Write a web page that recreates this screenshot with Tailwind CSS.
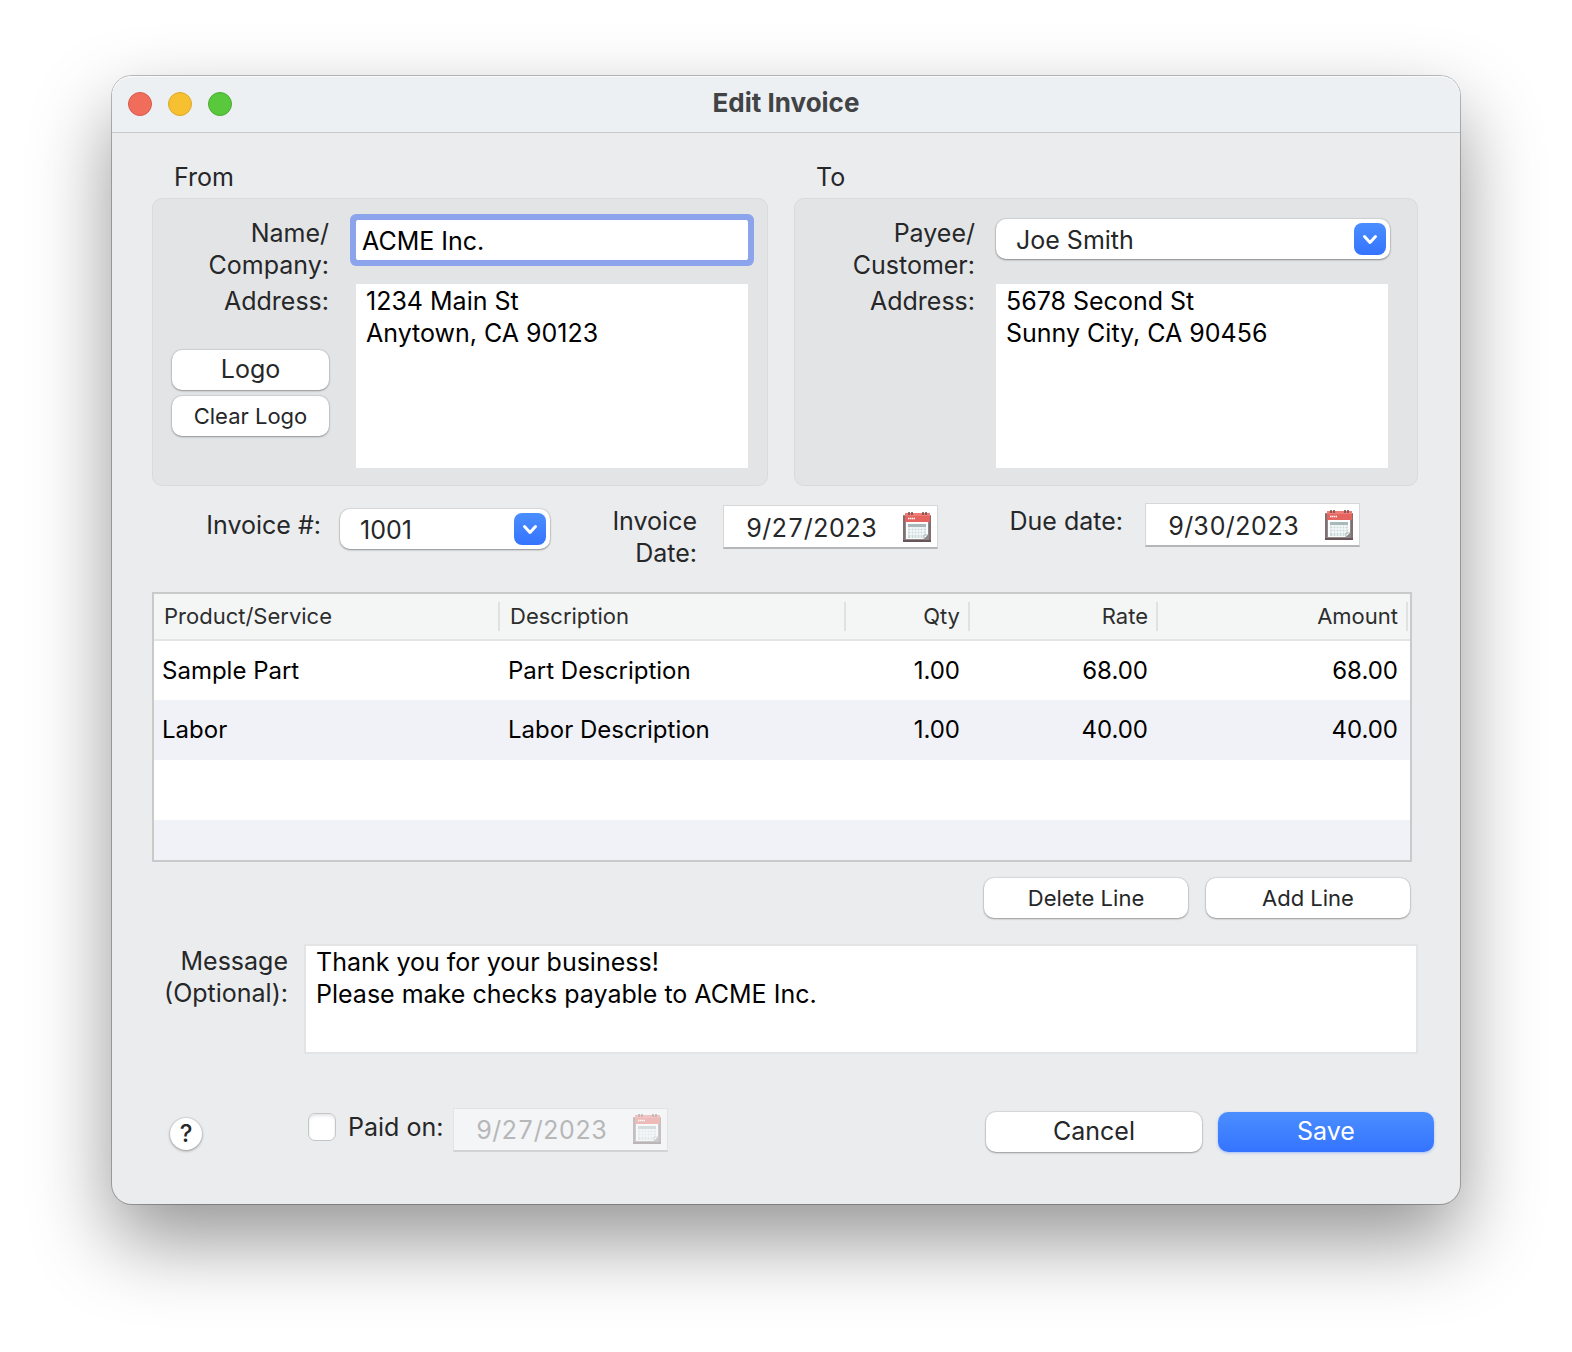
<!DOCTYPE html>
<html lang="en">
  <head>
    <meta charset="UTF-8" />
    <meta name="viewport" content="width=device-width, initial-scale=1.0" />
    <script src="https://cdn.jsdelivr.net/npm/@tailwindcss/browser@4"></script>
    <title>Edit Invoice</title>
  </head>
  <body class="bg-white px-28 pt-19 pb-37 font-[Inter,sans-serif] text-[25px] leading-8 text-[#262728]">
    <!-- Shared icons -->
    <svg class="hidden">
      <symbol id="calendar" viewBox="0 0 30 32">
        <path d="M1 4h28v27H1z" fill="#94878a" />
        <path d="M1 5h2v26H1zM27 5h2v26h-2z" fill="#7d6f72" />
        <path d="M1 29h28v2H1z" fill="#665659" />
        <path d="M3 2h25v9H3z" fill="#e5645f" />
        <path d="M3 2h25v3H3z" fill="#ee7c75" />
        <path d="M4 11h22v13l-4 4H4z" fill="#fbfdfd" />
        <path d="M6 13h18v11l-3 3H6z" fill="#cbd9da" />
        <path d="M6 13h18v3H6z" fill="#a9b8bb" />
        <path d="M6 17h18M6 20h18M6 23h18M9 16v11M12 16v11M15 16v11M18 16v11M21 16v11" stroke="#fff" fill="none" />
        <path d="M22 28v-4h4z" fill="#fff" stroke="#7f9796" stroke-width=".7" />
        <path d="M6 7.500h7" stroke="#fff" stroke-width="1.500" stroke-dasharray="1.500 .5" />
        <path d="M7 1v3M10 1v3M21 1v3M24 1v3" stroke="#6d4a4a" stroke-width="1.500" />
      </symbol>
      <symbol id="chevron" viewBox="0 0 32 32">
        <path d="M10.500 13.500l5.500 6 5.500-6" fill="none" stroke="#fff" stroke-width="3" stroke-linecap="round" stroke-linejoin="round" />
      </symbol>
    </svg>

    <main class="rounded-[20px] bg-[#ebecee] shadow-[0_0_0_1px_rgba(0,0,0,0.25),0_36px_80px_rgba(0,0,0,0.42)]">
      <!-- Title bar -->
      <header class="grid h-[57px] grid-cols-[1fr_auto_1fr] items-center rounded-t-[20px] border-b border-[#c6c8ca] bg-[#ecf0f3] px-4 inset-shadow-[0_1px_0_#fafbfb]">
        <div class="flex gap-4">
          <button aria-label="Close" class="size-6 rounded-full border border-[#d9584b] bg-[#f06d5c]"></button>
          <button aria-label="Minimize" class="size-6 rounded-full border border-[#dfa72a] bg-[#f6c030]"></button>
          <button aria-label="Zoom" class="size-6 rounded-full border border-[#48ad2d] bg-[#5ac83d]"></button>
        </div>
        <h1 class="pb-0.5 text-[26px] font-bold text-[#414345]">Edit Invoice</h1>
      </header>

      <form class="pt-7 pb-13">
        <!-- From / To -->
        <div class="mr-[42px] ml-10 grid grid-cols-[616fr_624fr] gap-[26px]">
          <section>
            <h2 class="mb-[5px] pl-[22px]">From</h2>
            <div class="grid grid-cols-[157px_1fr] gap-x-[27px] gap-y-[3px] rounded-[10px] border border-[#d8dadb] bg-[#e3e4e6] pt-[18px] pr-[19px] pb-[17px] pl-[19px]">
              <label for="company" class="text-right">Name/<br />Company:</label>
              <div class="pt-[3px]">
                <div class="rounded-xs bg-white ring-6 ring-[#8ba4eb]">
                  <input id="company" type="text" value="ACME Inc." class="h-10 w-full px-1.5 pt-0.5 text-black outline-none" />
                </div>
              </div>
              <div class="flex flex-col pt-px">
                <label for="from-address" class="text-right">Address:</label>
                <button type="button" class="mt-[33px] h-10 rounded-[10px] bg-white pb-0.5 shadow-[0_0_1px_1px_rgba(0,0,0,0.08),0_1px_2px_rgba(0,0,0,0.3)]">Logo</button>
                <button type="button" class="mt-1.5 h-10 rounded-[10px] bg-white text-[22px] shadow-[0_0_1px_1px_rgba(0,0,0,0.08),0_1px_2px_rgba(0,0,0,0.3)]">Clear Logo</button>
              </div>
              <textarea id="from-address" class="h-46 w-full resize-none bg-white px-2.5 py-px text-black outline-none">
1234 Main St
Anytown, CA 90123</textarea>
            </div>
          </section>

          <section>
            <h2 class="mb-[5px] pl-[22px]">To</h2>
            <div class="grid grid-cols-[161px_1fr] gap-x-[21px] gap-y-[3px] rounded-[10px] border border-[#d8dadb] bg-[#e3e4e6] pt-[18px] pr-[29px] pb-[17px] pl-[19px]">
              <label for="payee" class="text-right">Payee/<br />Customer:</label>
              <div class="relative mt-0.5 -mr-0.5 h-10">
                <select id="payee" class="h-10 w-full appearance-none rounded-[10px] bg-white px-5 pt-0.5 shadow-[0_0_1px_1px_rgba(0,0,0,0.08),0_1px_2px_rgba(0,0,0,0.35)] outline-none">
                  <option>Joe Smith</option>
                </select>
                <svg class="pointer-events-none absolute top-1 right-1 size-8 rounded-lg bg-linear-to-b from-[#4b8eff] to-[#3573ff]"><use href="#chevron" /></svg>
              </div>
              <label for="to-address" class="pt-px text-right">Address:</label>
              <textarea id="to-address" class="h-46 w-full resize-none bg-white px-2.5 py-px text-black outline-none">
5678 Second St
Sunny City, CA 90456</textarea>
            </div>
          </section>
        </div>

        <!-- Number and dates -->
        <div class="mt-[17px] mr-25 ml-10 grid grid-cols-[188fr_210fr_173fr_215fr_207fr_215fr] items-start">
          <label for="number" class="pt-1.5 pr-[19px] text-right">Invoice #:</label>
          <div class="relative mt-1.5 h-10">
            <select id="number" class="h-10 w-full appearance-none rounded-[10px] bg-white px-5 pt-0.5 shadow-[0_0_1px_1px_rgba(0,0,0,0.08),0_1px_2px_rgba(0,0,0,0.35)] outline-none">
              <option>1001</option>
            </select>
            <svg class="pointer-events-none absolute top-1 right-1 size-8 rounded-lg bg-linear-to-b from-[#4b8eff] to-[#3573ff]"><use href="#chevron" /></svg>
          </div>
          <label for="invoice-date" class="pt-0.5 pr-[26px] text-right">Invoice<br />Date:</label>
          <div class="mt-0.5 flex h-11 items-center border border-b-2 border-[#d6d7d9] border-b-[#b5b6b8] bg-white pr-[5px] pl-[22px]">
            <input id="invoice-date" type="text" value="9/27/2023" class="w-full min-w-0 pt-0.5 tabular-nums outline-none" />
            <button type="button" aria-label="Pick invoice date"><svg class="h-8 w-[30px]"><use href="#calendar" /></svg></button>
          </div>
          <label for="due-date" class="pt-0.5 pr-[22px] text-right">Due date:</label>
          <div class="flex h-11 items-center border border-b-2 border-[#d6d7d9] border-b-[#b5b6b8] bg-white pr-[5px] pl-[22px]">
            <input id="due-date" type="text" value="9/30/2023" class="w-full min-w-0 pt-0.5 tabular-nums outline-none" />
            <button type="button" aria-label="Pick due date"><svg class="h-8 w-[30px]"><use href="#calendar" /></svg></button>
          </div>
        </div>

        <!-- Line items -->
        <div class="mt-[23px] mr-12 ml-10 border-2 border-[#c9cbcb] bg-white">
          <table class="w-full table-fixed text-2xl text-black">
            <colgroup>
              <col class="w-[346px]" />
              <col class="w-[346px]" />
              <col class="w-[124px]" />
              <col class="w-[188px]" />
              <col />
            </colgroup>
            <thead class="bg-[#f4f6f5] text-[22px] text-[#2c2e2e]">
              <tr class="h-[46px] border-b-2 border-[#e3e5e4]">
                <th class="text-left font-normal"><div class="border-r-2 border-[#e0e2e1] px-2.5">Product/Service</div></th>
                <th class="text-left font-normal"><div class="border-r-2 border-[#e0e2e1] px-2.5">Description</div></th>
                <th class="text-right font-normal"><div class="border-r-2 border-[#e0e2e1] px-2">Qty</div></th>
                <th class="text-right font-normal"><div class="border-r-2 border-[#e0e2e1] px-2">Rate</div></th>
                <th class="text-right font-normal"><div class="mr-0.5 border-r-2 border-[#e0e2e1] px-2">Amount</div></th>
              </tr>
            </thead>
            <tbody>
              <tr class="h-15">
                <td class="px-2">Sample Part</td>
                <td class="px-2">Part Description</td>
                <td class="px-2.5 text-right">1.00</td>
                <td class="px-2.5 text-right">68.00</td>
                <td class="px-3 text-right">68.00</td>
              </tr>
              <tr class="h-15 bg-[#f1f2f7]">
                <td class="px-2">Labor</td>
                <td class="px-2">Labor Description</td>
                <td class="px-2.5 text-right">1.00</td>
                <td class="px-2.5 text-right">40.00</td>
                <td class="px-3 text-right">40.00</td>
              </tr>
              <tr class="h-15">
                <td colspan="5"></td>
              </tr>
              <tr class="h-10 bg-[#f1f2f7]">
                <td colspan="5"></td>
              </tr>
            </tbody>
          </table>
        </div>
        <div class="mt-4 mr-[50px] flex justify-end gap-[18px] text-[22px]">
          <button type="button" class="h-10 w-51 rounded-[10px] bg-white shadow-[0_0_1px_1px_rgba(0,0,0,0.08),0_1px_2px_rgba(0,0,0,0.3)]">Delete Line</button>
          <button type="button" class="h-10 w-51 rounded-[10px] bg-white shadow-[0_0_1px_1px_rgba(0,0,0,0.08),0_1px_2px_rgba(0,0,0,0.3)]">Add Line</button>
        </div>

        <!-- Message -->
        <div class="mt-[26px] mr-[42px] ml-10 flex gap-4">
          <label for="message" class="w-34 shrink-0 pt-px text-right">Message<br />(Optional):</label>
          <textarea id="message" class="h-[110px] w-full resize-none border-2 border-[#e3e4e5] bg-white px-2.5 text-black outline-none">
Thank you for your business!
Please make checks payable to ACME Inc.</textarea>
        </div>

        <!-- Footer -->
        <div class="mt-[53px] mr-[26px] ml-[58px] flex h-[45px] items-center">
          <button type="button" aria-label="Help" class="mt-2 size-8 rounded-full bg-white text-2xl leading-8 font-medium shadow-[0_0_1px_1px_rgba(0,0,0,0.06),0_1px_3px_rgba(0,0,0,0.35)]">?</button>
          <div class="ml-[106px] flex w-[145px] items-center gap-3 pb-1.5">
            <input id="paid" type="checkbox" class="size-7 shrink-0 appearance-none rounded-[7px] border border-[#c4c5c7] bg-white inset-shadow-[0_2px_3px_rgba(0,0,0,0.1)]" />
            <label for="paid" class="whitespace-nowrap">Paid on:</label>
          </div>
          <div class="flex h-11 w-[215px] items-center border border-b-2 border-[#e2e3e5] border-b-[#d2d3d5] bg-[#f4f5f7] pr-[5px] pl-[22px]">
            <input id="paid-date" type="text" aria-label="Paid date" value="9/27/2023" disabled class="w-full min-w-0 pt-0.5 text-[#b6b7b9] tabular-nums outline-none" />
            <button type="button" aria-label="Pick paid date" disabled><svg class="h-8 w-[30px] opacity-40"><use href="#calendar" /></svg></button>
          </div>
          <div class="mt-1 ml-auto flex gap-4">
            <button type="button" class="h-10 w-54 rounded-[10px] bg-white pb-0.5 shadow-[0_0_1px_1px_rgba(0,0,0,0.08),0_1px_2px_rgba(0,0,0,0.3)]">Cancel</button>
            <button type="submit" class="h-10 w-54 rounded-[10px] bg-linear-to-b from-[#4b8eff] to-[#3573ff] pb-0.5 text-white shadow-[0_1px_3px_rgba(53,115,255,0.4)]">Save</button>
          </div>
        </div>
      </form>
    </main>
  </body>
</html>
